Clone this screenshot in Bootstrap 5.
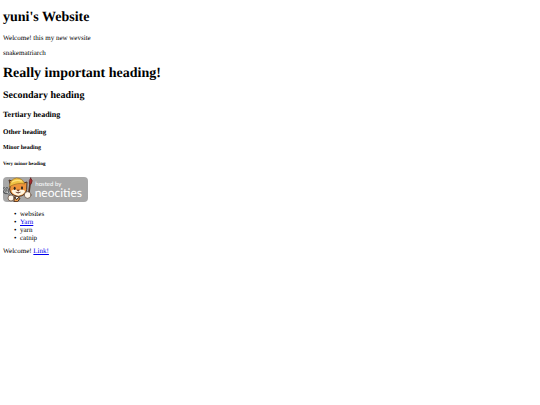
<!DOCTYPE html>
<html lang="en">
<head>
<meta charset="utf-8">
<meta name="viewport" content="width=device-width, initial-scale=1">
<title>yuni's Website</title>
<link href="https://cdn.jsdelivr.net/npm/bootstrap@5.3.0/dist/css/bootstrap.min.css" rel="stylesheet">
<style>
body { font-family: "Liberation Serif", "Times New Roman", serif; font-size: 7px; line-height: 8px; color: #000; background: #fff; padding: 10px 3px; text-rendering: geometricPrecision; }
h1, h2, h3, h4, h5, h6 { font-weight: 700; line-height: 8px; margin: 0 0 8px; }
h1 { font-size: 14px; line-height: 16px; }
h2 { font-size: 10px; line-height: 12px; }
h3 { font-size: 8px; line-height: 10px; }
h4 { font-size: 7px; }
h5 { font-size: 6px; margin-bottom: 9px; }
h6 { font-size: 5px; }
p { margin: 0 0 7px; }
ul { padding-left: 17px; margin: 0 0 5px; list-style-type: "•  "; }
a { color: #0000ee; }
.intro { margin-bottom: 9px; }
.site-logo { width: 85px; height: 25px; }
.logo-text { font-family: Lato, sans-serif; fill: #fff; }
</style>
<script src="https://cdn.jsdelivr.net/npm/bootstrap@5.3.0/dist/js/bootstrap.bundle.min.js"></script>
</head>
<body>
<main>
<h1>yuni's Website</h1>
<p>Welcome! this my new wevsite</p>
<p class="intro">snakematriarch</p>
<h1>Really important heading!</h1>
<h2>Secondary heading</h2>
<h3>Tertiary heading</h3>
<h4>Other heading</h4>
<h5>Minor heading</h5>
<h6>Very minor heading</h6>
<svg class="site-logo d-block mb-2" viewBox="0 0 255 75" role="img" aria-label="hosted by neocities">
  <rect width="255" height="75" rx="12" fill="#a8a8a8"/>
  <g stroke-linecap="round" stroke-linejoin="round">
    <path d="M3 33L24 60M2 43Q6 51 14 47M12 33Q17 40 14 47" stroke="#55585a" stroke-width="6" fill="none"/>
    <path d="M3 33L24 60M3 43Q7 49 14 47M12 34Q16 40 14 47" stroke="#d5d7d7" stroke-width="2" fill="none"/>
    <path d="M82 14L77 53" stroke="#54321f" stroke-width="5"/>
    <path d="M83 3Q92 10 84 22L79 20Q77 9 83 3Z" fill="#a3292b" stroke="#602020" stroke-width="2"/>
    <path d="M22 24L18 9L33 14Q50 7 62 18L72 15L71 38Q68 57 46 58Q21 56 20 37Z" fill="#ee943b" stroke="#4b3020" stroke-width="3"/>
    <path d="M19 29Q21 7 40 3Q59 3 66 21Q44 15 19 29Z" fill="#f0c244" stroke="#9b6b20" stroke-width="2"/>
    <path d="M27 15Q40 7 55 12" fill="none" stroke="#ffe37b" stroke-width="4"/>
    <path d="M25 41Q38 33 45 42Q57 33 67 42Q62 54 46 56Q29 53 25 41Z" fill="#fff5df"/>
    <ellipse cx="35" cy="34" rx="3" ry="5" fill="#302720"/>
    <ellipse cx="57" cy="33" rx="3" ry="5" fill="#302720"/>
    <path d="M43 39L49 39L46 42ZM39 46Q45 51 52 46" fill="#693a2c" stroke="#693a2c" stroke-width="2"/>
    <path d="M35 60Q43 56 51 64L44 74H34Z" fill="#eea04c" stroke="#51311d" stroke-width="3"/>
    <path d="M36 60L40 68L48 61" fill="#fff" stroke="#302720" stroke-width="3"/>
    <circle cx="24" cy="63" r="9" fill="#fff6e9" stroke="#57402f" stroke-width="2"/>
    <circle cx="74" cy="54" r="10" fill="#fff6e9" stroke="#57402f" stroke-width="2"/>
  </g>
  <text class="logo-text" x="97" y="27" font-size="18">hosted by</text>
  <text class="logo-text" x="95" y="59" font-size="36">neocities</text>
</svg>
<ul>
<li>websites</li>
<li><a href="#yarn">Yarn</a></li>
<li>yarn</li>
<li>catnip</li>
</ul>
<p class="mb-0">Welcome! <a href="#link">Link!</a></p>
</main>
</body>
</html>
